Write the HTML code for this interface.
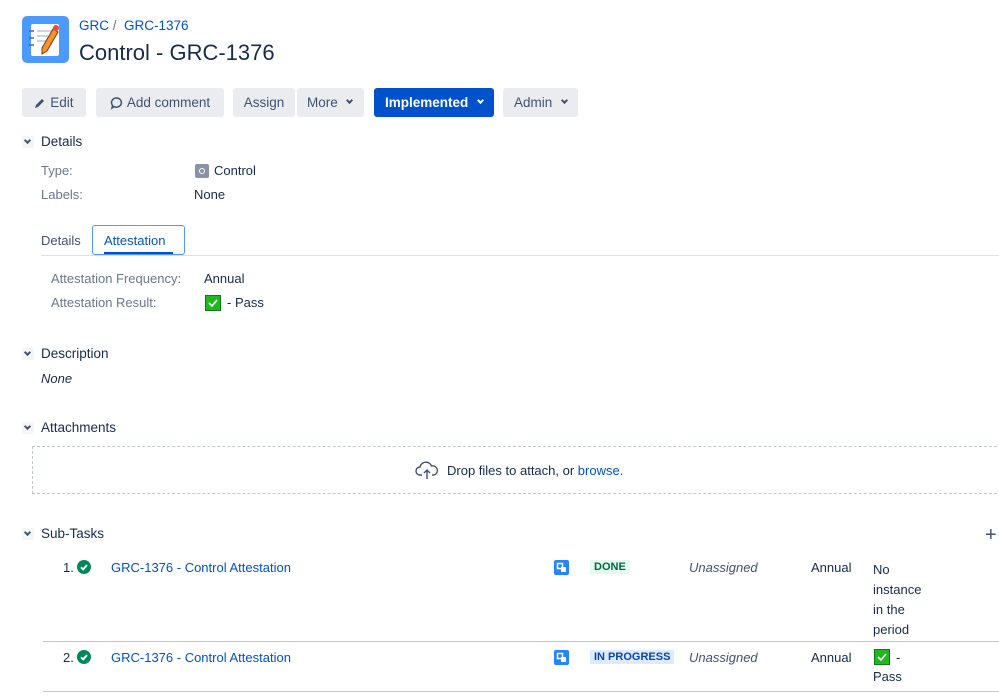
<!DOCTYPE html>
<html><head><meta charset="utf-8"><style>
*{margin:0;padding:0;box-sizing:border-box}
body{width:999px;height:698px;background:#fff;font-family:"Liberation Sans",sans-serif;font-size:13px;color:#172b4d;position:relative;overflow:hidden}
.a{position:absolute;white-space:nowrap}
.btn{position:absolute;top:88px;height:29px;background:#ebecf0;border-radius:3px;color:#42526e;font-size:13.5px;line-height:29px;text-align:center}
.lnk{color:#0052cc}
.chev{position:absolute;width:6px;height:6px;border-right:2px solid currentColor;border-bottom:2px solid currentColor;transform:rotate(45deg)}
.sec{font-size:13.5px;color:#172b4d}
.tg{position:absolute;width:14px;height:14px;background:#ebecf0;border-radius:2px}
.lab{color:#6b778c}
.chk{position:absolute;width:16px;height:16px;background:#1fb81f;border:1px solid #137a13;}
.ok{position:absolute;width:14px;height:14px;border-radius:50%;background:#00875a}
.st{position:absolute;width:15px;height:15px;background:#2684ff;border-radius:2px}
.sq{position:absolute;width:12px;height:12px;background:#f4f5f7;border-radius:2px}
</style></head><body>
<svg class="a" style="left:22px;top:16px" width="47" height="47" viewBox="0 0 47 47"><rect width="47" height="47" rx="5" fill="#4c9aff"/><rect x="9" y="8" width="28" height="32" rx="2" fill="#fff"/><g stroke="#4c6a8c" stroke-width="1.5"><line x1="7" y1="15" x2="12" y2="15"/><line x1="7" y1="22" x2="12" y2="22"/><line x1="7" y1="29" x2="12" y2="29"/></g><g stroke="#c1c7d0" stroke-width="1.5"><line x1="15" y1="15" x2="30" y2="15"/><line x1="15" y1="20" x2="26" y2="20"/><line x1="15" y1="25" x2="24" y2="25"/></g><path d="M31 13 L36 16 L25 35 L20 38 L20 32 Z" fill="#f79232" stroke="#7a3d00" stroke-width="1"/><circle cx="34" cy="12" r="3" fill="#e5493a"/></svg>
<div class="a lnk" style="left:79px;top:18px;font-size:13.5px">GRC <span style="color:#6b778c">/</span>&nbsp;&nbsp;GRC-1376</div>
<div class="a" style="left:79px;top:40px;font-size:22px;color:#172b4d">Control - GRC-1376</div>

<div class="btn" style="left:22px;width:64px"><svg style="vertical-align:-2px" width="12" height="12" viewBox="0 0 12 12"><path d="M1 11 L2 8 L8 2 L10 4 L4 10 Z" fill="#42526e"/></svg> Edit</div>
<div class="btn" style="left:96px;width:128px"><svg style="vertical-align:-3px" width="14" height="14" viewBox="0 0 14 14"><path d="M7 2a5 4.6 0 1 1-3 8.6L2 12l.6-2.6A5 4.6 0 0 1 7 2z" fill="none" stroke="#42526e" stroke-width="1.5"/></svg> Add comment</div>
<div class="btn" style="left:233px;width:62px">Assign</div>
<div class="btn" style="left:297px;width:67px;text-align:left;padding-left:10px">More<span class="chev" style="left:50px;top:10px;width:5px;height:5px"></span></div>
<div class="btn" style="left:374px;width:120px;background:#0052cc;color:#fff;font-weight:bold;text-align:left;padding-left:11px">Implemented<span class="chev" style="left:104px;top:10px;width:5px;height:5px"></span></div>
<div class="btn" style="left:503px;width:75px;text-align:left;padding-left:11px">Admin<span class="chev" style="left:59px;top:10px;width:5px;height:5px"></span></div>

<div class="sq" style="left:22px;top:136px"></div>
<span class="chev" style="left:25px;top:138px;width:5px;height:5px;color:#42526e"></span>
<div class="a sec" style="left:41px;top:134px">Details</div>
<div class="a lab" style="left:41px;top:163px">Type:</div>
<div class="tg" style="left:195px;top:164px;background:#8993a4"><div style="position:absolute;left:4px;top:4px;width:6px;height:6px;border-radius:50%;border:1.5px solid #fff"></div></div>
<div class="a" style="left:214px;top:163px">Control</div>
<div class="a lab" style="left:41px;top:187px">Labels:</div>
<div class="a" style="left:194px;top:187px">None</div>

<div class="a" style="left:41px;top:255px;width:958px;height:1px;background:#dfe1e6"></div>
<div class="a" style="left:41px;top:233px;color:#42526e">Details</div>
<div class="a" style="left:92px;top:225px;width:93px;height:30px;border:1.5px solid #4c9aff;border-radius:3px;background:#fff"></div>
<div class="a" style="left:104px;top:233px;color:#0052cc">Attestation</div>
<div class="a" style="left:104px;top:252px;width:69px;height:2px;background:#0052cc"></div>

<div class="a lab" style="left:51px;top:271px">Attestation Frequency:</div>
<div class="a" style="left:204px;top:271px">Annual</div>
<div class="a lab" style="left:51px;top:295px">Attestation Result:</div>
<div class="chk" style="left:205px;top:295px"><svg width="14" height="14" viewBox="0 0 14 14"><path d="M3 7l3 3 5-6" fill="none" stroke="#fff" stroke-width="1.6"/></svg></div>
<div class="a" style="left:227px;top:295px">- Pass</div>

<div class="sq" style="left:22px;top:348px"></div>
<span class="chev" style="left:25px;top:350px;width:5px;height:5px;color:#42526e"></span>
<div class="a sec" style="left:41px;top:346px">Description</div>
<div class="a" style="left:41px;top:371px;font-style:italic">None</div>

<div class="sq" style="left:22px;top:422px"></div>
<span class="chev" style="left:25px;top:424px;width:5px;height:5px;color:#42526e"></span>
<div class="a sec" style="left:41px;top:420px">Attachments</div>
<div class="a" style="left:32px;top:446px;width:980px;height:48px;border:1px dashed #c1c7d0"></div>
<svg class="a" style="left:415px;top:460px" width="24" height="20" viewBox="0 0 24 20"><path d="M7 15H5a4 4 0 0 1 0-8 6 6 0 0 1 11.5-1A4.5 4.5 0 0 1 19 15h-2" fill="none" stroke="#42526e" stroke-width="1.4"/><path d="M12 19V10M9 13l3-3 3 3" fill="none" stroke="#42526e" stroke-width="1.4"/></svg>
<div class="a" style="left:447px;top:463px;color:#172b4d">Drop files to attach, or <span class="lnk">browse.</span></div>

<div class="sq" style="left:22px;top:528px"></div>
<span class="chev" style="left:25px;top:530px;width:5px;height:5px;color:#42526e"></span>
<div class="a sec" style="left:41px;top:526px">Sub-Tasks</div>
<div class="a" style="left:985px;top:524px;font-size:20px;color:#42526e">+</div>

<div class="a" style="left:63px;top:560px">1.</div>
<div class="ok" style="left:77px;top:560px"><svg width="14" height="14" viewBox="0 0 14 14"><path d="M4 7.2l2.2 2.2L10 5" fill="none" stroke="#fff" stroke-width="1.8"/></svg></div>
<div class="a lnk" style="left:111px;top:560px">GRC-1376 - Control Attestation</div>
<div class="st" style="left:554px;top:560px"><svg width="15" height="15" viewBox="0 0 15 15"><rect x="3.5" y="3.5" width="5" height="5" fill="none" stroke="#fff" stroke-width="1.5"/><rect x="7" y="7" width="5" height="5" fill="#fff"/></svg></div>
<div class="a" style="left:590px;top:560px;background:#e3fcef;color:#006644;font-size:11px;font-weight:bold;padding:1px 4px">DONE</div>
<div class="a" style="left:689px;top:560px;font-style:italic;color:#42526e">Unassigned</div>
<div class="a" style="left:811px;top:560px">Annual</div>
<div class="a" style="left:873px;top:560px;line-height:20px;white-space:normal;width:60px">No<br>instance<br>in the<br>period</div>
<div class="a" style="left:43px;top:641px;width:956px;height:1px;background:#c1c7d0"></div>

<div class="a" style="left:63px;top:650px">2.</div>
<div class="ok" style="left:77px;top:650px"><svg width="14" height="14" viewBox="0 0 14 14"><path d="M4 7.2l2.2 2.2L10 5" fill="none" stroke="#fff" stroke-width="1.8"/></svg></div>
<div class="a lnk" style="left:111px;top:650px">GRC-1376 - Control Attestation</div>
<div class="st" style="left:554px;top:650px"><svg width="15" height="15" viewBox="0 0 15 15"><rect x="3.5" y="3.5" width="5" height="5" fill="none" stroke="#fff" stroke-width="1.5"/><rect x="7" y="7" width="5" height="5" fill="#fff"/></svg></div>
<div class="a" style="left:590px;top:650px;background:#deebff;color:#0747a6;font-size:11px;font-weight:bold;padding:1px 4px">IN PROGRESS</div>
<div class="a" style="left:689px;top:650px;font-style:italic;color:#42526e">Unassigned</div>
<div class="a" style="left:811px;top:650px">Annual</div>
<div class="chk" style="left:874px;top:649px"><svg width="14" height="14" viewBox="0 0 14 14"><path d="M3 7l3 3 5-6" fill="none" stroke="#fff" stroke-width="1.6"/></svg></div>
<div class="a" style="left:896px;top:650px">-</div>
<div class="a" style="left:873px;top:669px">Pass</div>
<div class="a" style="left:43px;top:691px;width:956px;height:1px;background:#c1c7d0"></div>
</body></html>
